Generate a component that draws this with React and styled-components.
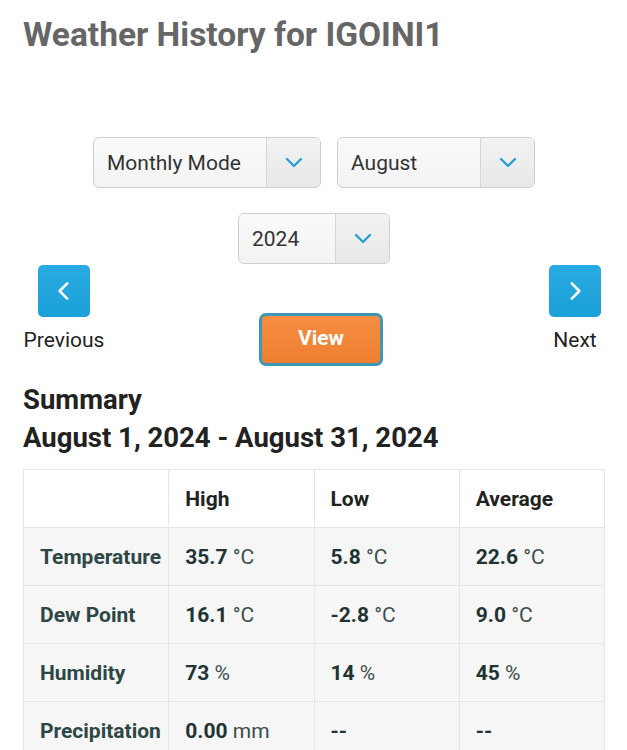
import React from 'react'
import styled, { createGlobalStyle } from 'styled-components'

const GlobalStyle = createGlobalStyle`
  body {
    margin: 0;
    background: #fff;
    font-family: Roboto, 'Noto Sans', sans-serif;
    color: #222;
  }
`

const Page = styled.div`
  width: 627px;
  padding: 0 22px 0 23px;
  box-sizing: border-box;
`

const Title = styled.h1`
  margin: 0;
  padding-top: 14px;
  font-size: 33.5px;
  line-height: 42px;
  font-weight: 700;
  color: #666;
`

const Controls = styled.div`
  margin-top: 81px;
  display: flex;
  flex-direction: column;
  align-items: center;
  gap: 25px;
`

const SelectRow = styled.div`
  display: flex;
  justify-content: center;
  gap: 16px;
`

const SelectBox = styled.div`
  width: ${({ $width }) => $width}px;
  height: 51px;
  box-sizing: border-box;
  border: 1px solid #cfcfcf;
  border-radius: 6px;
  background: linear-gradient(#fafafa, #f3f3f3);
  display: flex;
  overflow: hidden;
`

const SelectLabel = styled.div`
  flex: 1;
  display: flex;
  align-items: center;
  padding-left: 13px;
  font-size: 21px;
  color: #333;
`

const SelectArrow = styled.div`
  width: 53px;
  border-left: 1px solid #d6d6d6;
  background: linear-gradient(#f2f2f2, #e8e8e8);
  display: flex;
  align-items: center;
  justify-content: center;
`

const NavRow = styled.div`
  display: flex;
  justify-content: space-between;
  align-items: flex-start;
  margin-top: 1px;
  padding-right: 4px;
`

const NavItem = styled.div`
  display: flex;
  flex-direction: column;
  align-items: center;
  gap: 11px;
  width: ${({ $width }) => $width}px;
`

const NavButton = styled.div`
  width: 52px;
  height: 52px;
  border-radius: 5px;
  background: linear-gradient(#27abe2, #1a9fd6);
  display: flex;
  align-items: center;
  justify-content: center;
`

const NavLabel = styled.div`
  font-size: 21px;
  line-height: 25px;
  color: #222;
`

const ViewButton = styled.button`
  margin-top: 48px;
  margin-right: 12px;
  width: 124px;
  height: 53px;
  border: 3px solid #3b98b6;
  border-radius: 7px;
  background: linear-gradient(#f68d42, #ee7f30);
  color: #fff;
  font-family: Roboto, sans-serif;
  font-weight: 700;
  font-size: 21px;
  padding-bottom: 4px;
`

const Summary = styled.h2`
  margin: 16px 0 0;
  font-size: 27.5px;
  line-height: 36px;
  font-weight: 700;
  color: #222;
`

const Range = styled.h3`
  margin: 2px 0 0;
  font-size: 27.5px;
  line-height: 36px;
  font-weight: 700;
  color: #222;
`

const Table = styled.table`
  margin-top: 13px;
  width: 582px;
  border-collapse: collapse;
  table-layout: fixed;
`

const Row = styled.tr`
  background: ${({ $head }) => ($head ? '#fff' : '#f6f6f6')};
`

const Cell = styled.td`
  height: 57px;
  border: 1px solid #e6e6e6;
  padding: 0 0 0 16px;
  font-size: 21px;
  color: ${({ $label }) => ($label ? '#2d4745' : '#233')};
  font-weight: ${({ $label }) => ($label ? 700 : 400)};
  white-space: nowrap;
  b {
    font-weight: 700;
  }
`

const HeadCell = styled.th`
  height: 57px;
  border: 1px solid #e6e6e6;
  padding: 0 0 0 16px;
  text-align: left;
  font-size: 21px;
  font-weight: 700;
  color: #222;
`

const Unit = styled.span`
  color: #3c4f4e;
  font-weight: 400;
`

const Chevron = ({ dir }) => {
  const d = {
    down: 'M5 8 L12 15 L19 8',
    left: 'M15 5 L8 12 L15 19',
    right: 'M9 5 L16 12 L9 19',
  }[dir]
  const size = dir === 'down' ? 24 : 26
  return (
    <svg width={size} height={size} viewBox='0 0 24 24' fill='none'>
      <path
        d={d}
        stroke={dir === 'down' ? '#2b9fd3' : '#fff'}
        strokeWidth='2.4'
        strokeLinecap='round'
        strokeLinejoin='round'
      />
    </svg>
  )
}

const Select = ({ width, label }) => (
  <SelectBox $width={width}>
    <SelectLabel>{label}</SelectLabel>
    <SelectArrow>
      <Chevron dir='down' />
    </SelectArrow>
  </SelectBox>
)

const rows = [
  ['Temperature', ['35.7', '°C'], ['5.8', '°C'], ['22.6', '°C']],
  ['Dew Point', ['16.1', '°C'], ['-2.8', '°C'], ['9.0', '°C']],
  ['Humidity', ['73', '%'], ['14', '%'], ['45', '%']],
  ['Precipitation', ['0.00', 'mm'], ['--', ''], ['--', '']],
]

const App = () => (
  <>
    <GlobalStyle />
    <Page>
      <Title>Weather History for IGOINI1</Title>
      <Controls>
        <SelectRow>
          <Select width={228} label='Monthly Mode' />
          <Select width={198} label='August' />
        </SelectRow>
        <SelectRow>
          <Select width={152} label='2024' />
        </SelectRow>
      </Controls>
      <NavRow>
        <NavItem $width={82}>
          <NavButton>
            <Chevron dir='left' />
          </NavButton>
          <NavLabel>Previous</NavLabel>
        </NavItem>
        <ViewButton>View</ViewButton>
        <NavItem $width={52}>
          <NavButton>
            <Chevron dir='right' />
          </NavButton>
          <NavLabel>Next</NavLabel>
        </NavItem>
      </NavRow>
      <Summary>Summary</Summary>
      <Range>August 1, 2024 - August 31, 2024</Range>
      <Table>
        <tbody>
          <Row $head>
            <HeadCell />
            <HeadCell>High</HeadCell>
            <HeadCell>Low</HeadCell>
            <HeadCell>Average</HeadCell>
          </Row>
          {rows.map(([label, ...vals]) => (
            <Row key={label}>
              <Cell $label>{label}</Cell>
              {vals.map(([v, u], i) => (
                <Cell key={i}>
                  <b>{v}</b>
                  {u && <Unit> {u}</Unit>}
                </Cell>
              ))}
            </Row>
          ))}
        </tbody>
      </Table>
    </Page>
  </>
)

export default App
